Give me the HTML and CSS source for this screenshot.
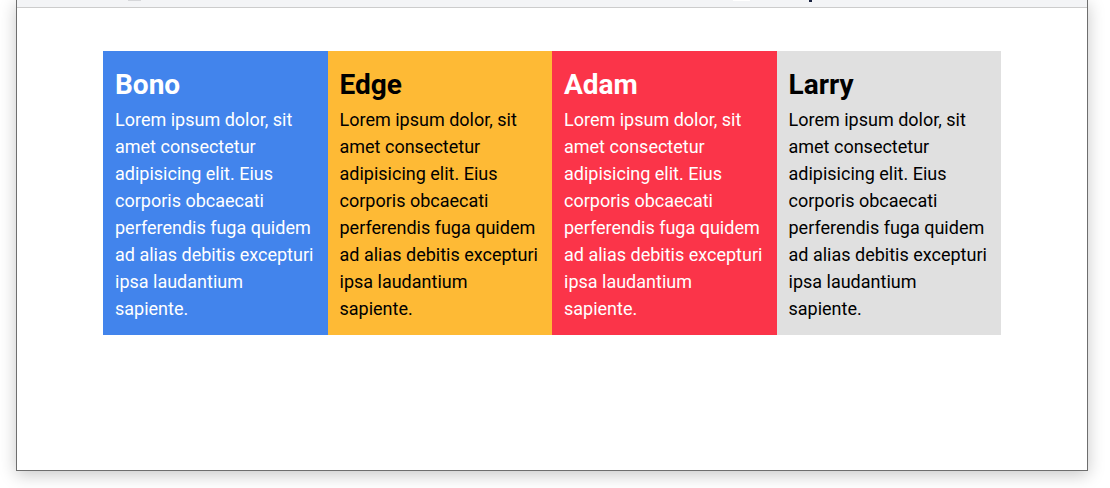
FILE: index.html
```html
<!DOCTYPE html>
<html>
<head>
<meta charset="utf-8">
<link rel="stylesheet" href="styles.css">
</head>
<body>
<div class="window">
  <div class="topbar">
    <span class="tb-a"></span>
    <span class="tb-b"></span>
    <span class="tb-c"></span>
  </div>
  <div class="content">
    <div class="cards">
      <div class="card blue">
        <h2>Bono</h2>
        <p>Lorem ipsum dolor, sit amet consectetur adipisicing elit. Eius corporis obcaecati perferendis fuga quidem ad alias debitis excepturi ipsa laudantium sapiente.</p>
      </div>
      <div class="card yellow">
        <h2>Edge</h2>
        <p>Lorem ipsum dolor, sit amet consectetur adipisicing elit. Eius corporis obcaecati perferendis fuga quidem ad alias debitis excepturi ipsa laudantium sapiente.</p>
      </div>
      <div class="card red">
        <h2>Adam</h2>
        <p>Lorem ipsum dolor, sit amet consectetur adipisicing elit. Eius corporis obcaecati perferendis fuga quidem ad alias debitis excepturi ipsa laudantium sapiente.</p>
      </div>
      <div class="card gray">
        <h2>Larry</h2>
        <p>Lorem ipsum dolor, sit amet consectetur adipisicing elit. Eius corporis obcaecati perferendis fuga quidem ad alias debitis excepturi ipsa laudantium sapiente.</p>
      </div>
    </div>
  </div>
</div>
</body>
</html>
```
FILE: styles.css
```css
html, body {
  margin: 0;
  padding: 0;
  background: #ffffff;
  width: 1110px;
  height: 488px;
  overflow: hidden;
}
body {
  font-family: Roboto, "Liberation Sans", sans-serif;
}
.window {
  margin-left: 16px;
  width: 1070px;
  height: 470px;
  border: 1px solid #6e6e6e;
  border-top: none;
  background: #ffffff;
  box-shadow: 0 4px 16px rgba(0, 0, 0, 0.22);
  display: flex;
  flex-direction: column;
}
.topbar {
  height: 7px;
  background: #f3f4f6;
  border-bottom: 1px solid #cccccc;
  position: relative;
  flex: none;
}
.tb-a {
  position: absolute;
  left: 111px;
  top: 0;
  width: 13px;
  height: 1px;
  background: #d6d7da;
}
.tb-b {
  position: absolute;
  left: 716px;
  top: 0;
  width: 17px;
  height: 1px;
  background: #ffffff;
}
.tb-c {
  position: absolute;
  left: 792px;
  top: 0;
  width: 3px;
  height: 2px;
  background: #1a2340;
}
.content {
  flex: 1;
  display: flex;
  justify-content: center;
  padding-top: 43px;
}
.cards {
  display: flex;
  width: 898px;
  align-self: flex-start;
}
.card {
  flex: 1;
  padding: 13px 12px;
  color: #000000;
}
.card h2 {
  margin: 0;
  font-size: 28px;
  font-weight: 700;
  line-height: 1.5;
}
.card p {
  margin: 0;
  font-size: 18px;
  line-height: 27px;
}
.blue { background: #4284ec; color: #ffffff; }
.yellow { background: #feba35; }
.red { background: #fb3449; color: #ffffff; }
.gray { background: #e0e0e0; }
```
